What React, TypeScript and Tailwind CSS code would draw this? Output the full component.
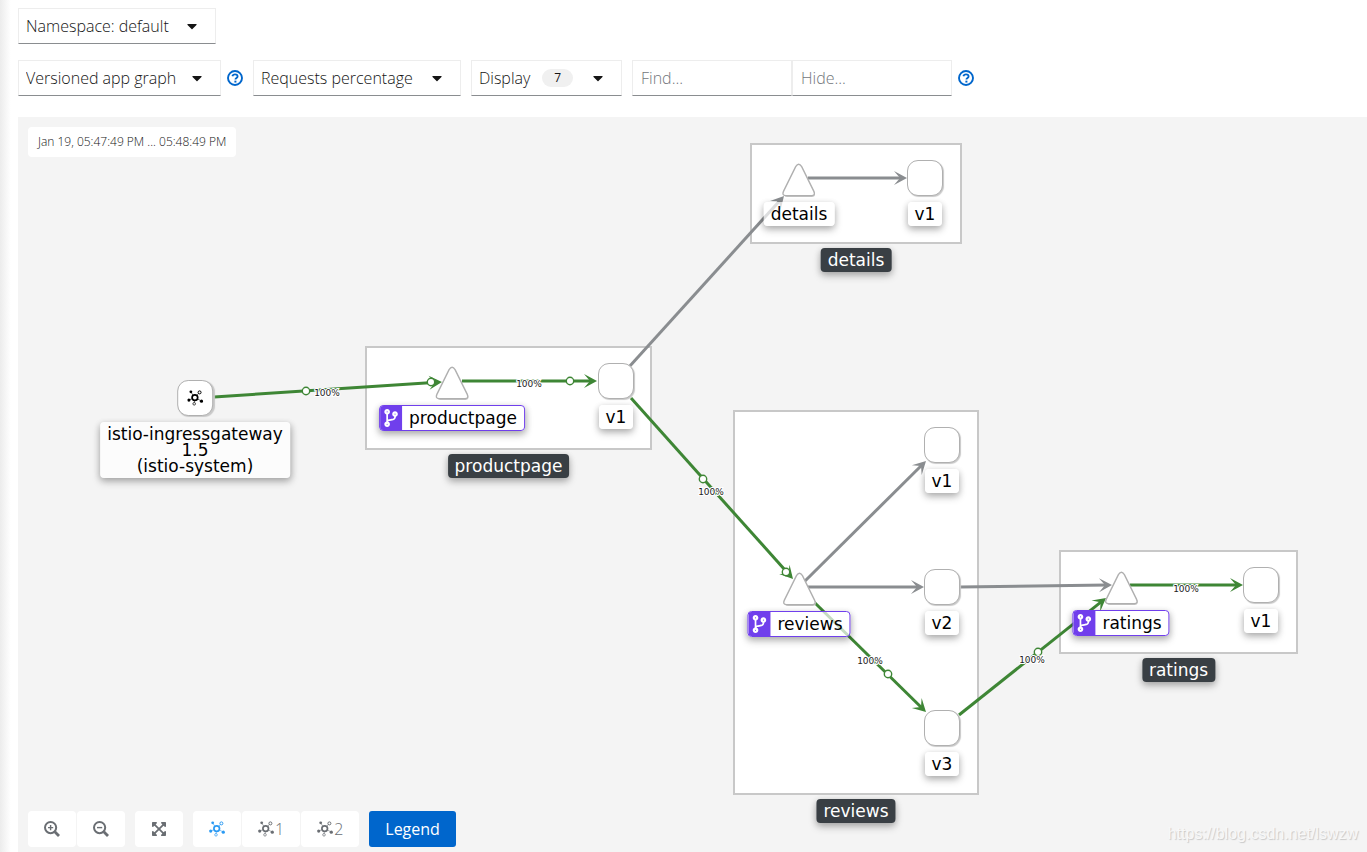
import type { ReactNode } from "react";
import { FaCaretDown, FaCodeBranch, FaExpandArrowsAlt } from "react-icons/fa";

const GREEN = "#3e8635";
const GRAY = "#8a8d90";

type Edge = {
  from: [number, number];
  to: [number, number];
  color: string;
  dots?: [number, number][];
  label?: [number, number];
};

const edges: Edge[] = [
  { from: [196, 280], to: [424, 265], color: GREEN, dots: [[288, 274], [413, 265]], label: [309, 279] },
  { from: [444, 264], to: [579, 264], color: GREEN, dots: [[552, 264]], label: [511, 270] },
  { from: [611, 250], to: [766, 79], color: GRAY },
  { from: [613, 281], to: [775, 462], color: GREEN, dots: [[685, 362], [768, 455]], label: [693, 378] },
  { from: [790, 61], to: [889, 61], color: GRAY },
  { from: [786, 465], to: [908, 344], color: GRAY },
  { from: [789, 470], to: [906, 470], color: GRAY },
  { from: [796, 485], to: [908, 595], color: GREEN, dots: [[870, 557]], label: [852, 547] },
  { from: [942, 470], to: [1094, 468], color: GRAY },
  { from: [941, 598], to: [1088, 481], color: GREEN, dots: [[1020, 535]], label: [1014, 546] },
  { from: [1112, 468], to: [1225, 468], color: GREEN, label: [1168, 475] },
];

const groups = [
  { name: "details", x: 732, y: 26, w: 212, h: 101 },
  { name: "productpage", x: 347, y: 229, w: 287, h: 104 },
  { name: "reviews", x: 715, y: 293, w: 246, h: 385 },
  { name: "ratings", x: 1041, y: 433, w: 239, h: 104 },
];

const workloads = [
  { name: "v1", x: 907, y: 43 },
  { name: "v1", x: 598, y: 246 },
  { name: "v1", x: 924, y: 310 },
  { name: "v2", x: 924, y: 452 },
  { name: "v3", x: 924, y: 593 },
  { name: "v1", x: 1243, y: 450 },
];

const services = [
  { name: "details", x: 781, y: 46, routed: false },
  { name: "productpage", x: 434, y: 249, routed: true },
  { name: "reviews", x: 781, y: 455, routed: true },
  { name: "ratings", x: 1103, y: 454, routed: true },
];

const TopologyIcon = () => (
  <svg viewBox="0 0 16 16" className="size-4 shrink-0" fill="none" stroke="currentColor" aria-hidden="true">
    <path d="M4 2.5 6 5.5M11.3 3.4 9.6 5.6M2.6 9.6 5 8.8M10.4 9 13.4 10.6M7.4 10.6 7.1 12.4" strokeWidth="0.6" />
    <circle cx="7.7" cy="7.6" r="2.8" strokeWidth="1.7" />
    <circle cx="12.4" cy="2.4" r="1.5" strokeWidth="1" />
    <circle cx="7" cy="13.8" r="1.3" strokeWidth="1" opacity="0.7" />
    <circle cx="3.7" cy="1.8" r="1.4" fill="currentColor" stroke="none" />
    <circle cx="1.7" cy="10.1" r="1.6" fill="currentColor" stroke="none" />
    <circle cx="14.3" cy="11.2" r="1.6" fill="currentColor" stroke="none" />
  </svg>
);

const ZoomIcon = ({ plus }: { plus?: boolean }) => (
  <svg viewBox="0 0 16 16" className="size-4" fill="none" stroke="currentColor" aria-hidden="true">
    <circle cx="6.6" cy="6.6" r="5.6" strokeWidth="2" />
    <path d="M10.8 10.8 15 15" strokeWidth="2.8" />
    <path d={plus ? "M4 6.6h5.2M6.6 4v5.2" : "M4 6.6h5.2"} strokeWidth="1.4" />
  </svg>
);

const HelpButton = () => (
  <button type="button" aria-label="Help" className="text-[#0066cc]">
    <svg viewBox="0 0 16 16" className="block size-4" fill="none" stroke="currentColor" aria-hidden="true">
      <circle cx="8" cy="8" r="7" strokeWidth="1.9" />
      <path d="M5.4 6.3C5.7 4.9 6.7 4.3 8 4.3c1.5 0 2.6.8 2.6 2.1 0 1.5-2.2 1.5-2.2 3.1" strokeWidth="1.8" />
      <path d="M7.4 11.6h2" strokeWidth="1.9" />
    </svg>
  </button>
);

const Dropdown = ({ label, value, width }: { label: string; value: string; width: string }) => (
  <div className={`relative ${width}`}>
    <select
      aria-label={label}
      className="h-9 w-full appearance-none border border-[#ededed] border-b-[#8a8d90] bg-white pl-[7px] text-[#151515] outline-none"
    >
      <option>{value}</option>
    </select>
    <FaCaretDown className="pointer-events-none absolute top-[10px] right-4 size-4 text-[#151515]" />
  </div>
);

const ToolButton = ({ label, children }: { label: string; children: ReactNode }) => (
  <button
    type="button"
    aria-label={label}
    className="flex h-9 min-w-12 items-center justify-center gap-px rounded-sm bg-white px-4 text-[#6a6e73]"
  >
    {children}
  </button>
);

const NodeLabel = ({ children }: { children: ReactNode }) => (
  <span className="rounded-sm bg-white/70 px-[7px] py-1 text-center leading-4 whitespace-nowrap shadow-[0_4px_8px_rgba(0,0,0,0.2),0_2px_6px_rgba(0,0,0,0.19)]">
    {children}
  </span>
);

const Square = ({ children }: { children?: ReactNode }) => (
  <div className="flex size-9 items-center justify-center rounded-[11px] border border-[#b0b0b0] bg-white shadow-[1px_1px_1px_#c8c8c8]">
    {children}
  </div>
);

const ArrowLine = ({ from, to, color }: Edge) => {
  const angle = (Math.atan2(to[1] - from[1], to[0] - from[0]) * 180) / Math.PI;
  const length = Math.hypot(to[0] - from[0], to[1] - from[1]);
  return (
    <g transform={`translate(${to[0]} ${to[1]}) rotate(${angle})`}>
      <path d={`M${-length} 0H-5`} stroke={color} strokeWidth="3" />
      <path d="M0 0-13-7-7 0-13 7Z" fill={color} />
    </g>
  );
};

const Graph = () => (
  <div className="absolute inset-0 overflow-hidden font-['Verdana','DejaVu_Sans',sans-serif] text-[17px] font-normal text-black">
    {groups.map((g) => (
      <div
        key={g.name}
        className="absolute border-2 border-[#c8c8c8] bg-white"
        style={{ left: g.x, top: g.y, width: g.w, height: g.h }}
      />
    ))}

    <svg className="absolute inset-0 h-full w-full" aria-hidden="true">
      {edges.map((e, i) => (
        <ArrowLine key={i} {...e} />
      ))}
      {edges.flatMap((e) => e.dots ?? []).map(([x, y]) => (
        <circle key={`${x}-${y}`} cx={x} cy={y} r="3.7" fill="#fff" stroke={GREEN} strokeWidth="1.4" />
      ))}
      {edges.map(
        (e, i) =>
          e.label && (
            <text
              key={i}
              x={e.label[0]}
              y={e.label[1]}
              fontSize="9"
              textAnchor="middle"
              fill="#222"
              stroke="#fff"
              strokeWidth="2"
              paintOrder="stroke"
            >
              100%
            </text>
          )
      )}
    </svg>

    {/* Service nodes */}
    {services.map((s) => (
      <div
        key={s.name}
        className="absolute flex -translate-x-1/2 flex-col items-center gap-1"
        style={{ left: s.x, top: s.y }}
      >
        <svg viewBox="0 0 36 35" className="h-[35px] w-9" aria-hidden="true">
          <path
            d="M15 4.3Q18 -.8 21 4.3L34 29.5Q35.4 33.6 31.4 34H6.6Q2.2 33.6 3.4 29.5Z"
            fill="#ccc"
          />
          <path
            d="M15 3.6Q18-1 21 3.6L33.2 28.4Q35 32.4 31 32.7H5Q1 32.4 2.8 28.4Z"
            fill="#fff"
            stroke="#b0b0b0"
            strokeWidth="1.4"
          />
        </svg>
        {s.routed ? (
          <div className="flex h-[26px] overflow-hidden rounded-sm border border-[#703fec] bg-white/70 whitespace-nowrap shadow-[0_4px_8px_rgba(0,0,0,0.2),0_2px_6px_rgba(0,0,0,0.19)]">
            <span className="flex w-[22px] items-center justify-center bg-[#703fec] text-white">
              <FaCodeBranch className="size-[18px]" />
            </span>
            <span className="px-[7px] leading-6">{s.name}</span>
          </div>
        ) : (
          <NodeLabel>{s.name}</NodeLabel>
        )}
      </div>
    ))}

    {/* Workload nodes */}
    {workloads.map((w) => (
      <div
        key={`${w.x}-${w.y}`}
        className="absolute flex -translate-x-1/2 flex-col items-center gap-[6px]"
        style={{ left: w.x, top: w.y }}
      >
        <Square />
        <NodeLabel>{w.name}</NodeLabel>
      </div>
    ))}

    <div className="absolute top-[263px] left-[177px] flex -translate-x-1/2 flex-col items-center gap-[6px]">
      <Square>
        <TopologyIcon />
      </Square>
      <NodeLabel>
        istio-ingressgateway
        <br />
        1.5
        <br />
        (istio-system)
      </NodeLabel>
    </div>

    {groups.map((g) => (
      <span
        key={g.name}
        className="absolute -translate-x-1/2 rounded-sm bg-[#393f44] px-[7px] py-1 leading-4 text-white shadow-[0_4px_8px_rgba(0,0,0,0.2),0_2px_6px_rgba(0,0,0,0.19)]"
        style={{ left: g.x + g.w / 2, top: g.y + g.h + 4 }}
      >
        {g.name}
      </span>
    ))}
  </div>
);

const App = () => {
  return (
    <div className="flex min-h-screen bg-white font-['Open_Sans',sans-serif] text-base font-light text-[#151515]">
      <div className="w-[18px] shrink-0 bg-linear-to-r from-[#ececec] to-white to-60%" />

      <main className="flex min-w-0 flex-1 flex-col">
        <header className="flex flex-col gap-4 pt-2 pb-[21px]">
          <Dropdown label="Namespace" value="Namespace: default" width="w-[198px]" />

          <div className="flex items-center">
            <Dropdown label="Graph type" value="Versioned app graph" width="w-[203px]" />
            <div className="flex w-8 justify-center pr-1">
              <HelpButton />
            </div>
            <Dropdown label="Edge labels" value="Requests percentage" width="w-[208px]" />
            <button
              type="button"
              aria-haspopup="menu"
              className="ml-[10px] flex h-9 w-[151px] items-center border border-[#ededed] border-b-[#8a8d90] pl-[7px]"
            >
              Display
              <span className="ml-3 rounded-full bg-[#f0f0f0] px-3 text-xs leading-[18px] font-medium">7</span>
              <FaCaretDown className="mr-[15px] ml-auto size-4" />
            </button>
            <form className="mr-[6px] ml-[10px] flex">
              <input
                aria-label="Find"
                placeholder="Find..."
                className="h-9 w-40 border border-[#ededed] border-b-[#8a8d90] px-2 outline-none placeholder:text-[#72767b]"
              />
              <input
                aria-label="Hide"
                placeholder="Hide..."
                className="h-9 w-40 border border-[#ededed] border-b-[#8a8d90] px-2 outline-none placeholder:text-[#72767b]"
              />
            </form>
            <HelpButton />
          </div>
        </header>

        <section className="relative flex flex-1 flex-col items-start justify-between bg-[#f4f4f4] px-[10px] pt-[10px] pb-[5px]">
          <Graph />

          <div className="relative rounded-sm bg-white px-[10px] text-xs leading-[30px]">
            Jan 19, 05:47:49 PM ... 05:48:49 PM
          </div>

          <div className="relative flex gap-[10px]">
            <div className="flex gap-px">
              <ToolButton label="Zoom in">
                <ZoomIcon plus />
              </ToolButton>
              <ToolButton label="Zoom out">
                <ZoomIcon />
              </ToolButton>
            </div>
            <ToolButton label="Zoom to fit">
              <FaExpandArrowsAlt className="size-4" />
            </ToolButton>
            <div className="flex gap-px">
              <ToolButton label="Default layout">
                <span className="text-[#2b9af3]">
                  <TopologyIcon />
                </span>
              </ToolButton>
              <ToolButton label="Layout 1">
                <TopologyIcon />1
              </ToolButton>
              <ToolButton label="Layout 2">
                <TopologyIcon />2
              </ToolButton>
            </div>
            <button type="button" className="h-9 rounded-[3px] bg-[#0066cc] px-4 font-medium text-white">
              Legend
            </button>
          </div>

          <div className="absolute right-[9px] bottom-[6px] font-['Liberation_Sans',sans-serif] font-normal text-[#f8f8f8] [text-shadow:1px_1px_1px_#c8c8c8]">
            https://blog.csdn.net/lswzw
          </div>
        </section>
      </main>
    </div>
  );
};

export default App;
